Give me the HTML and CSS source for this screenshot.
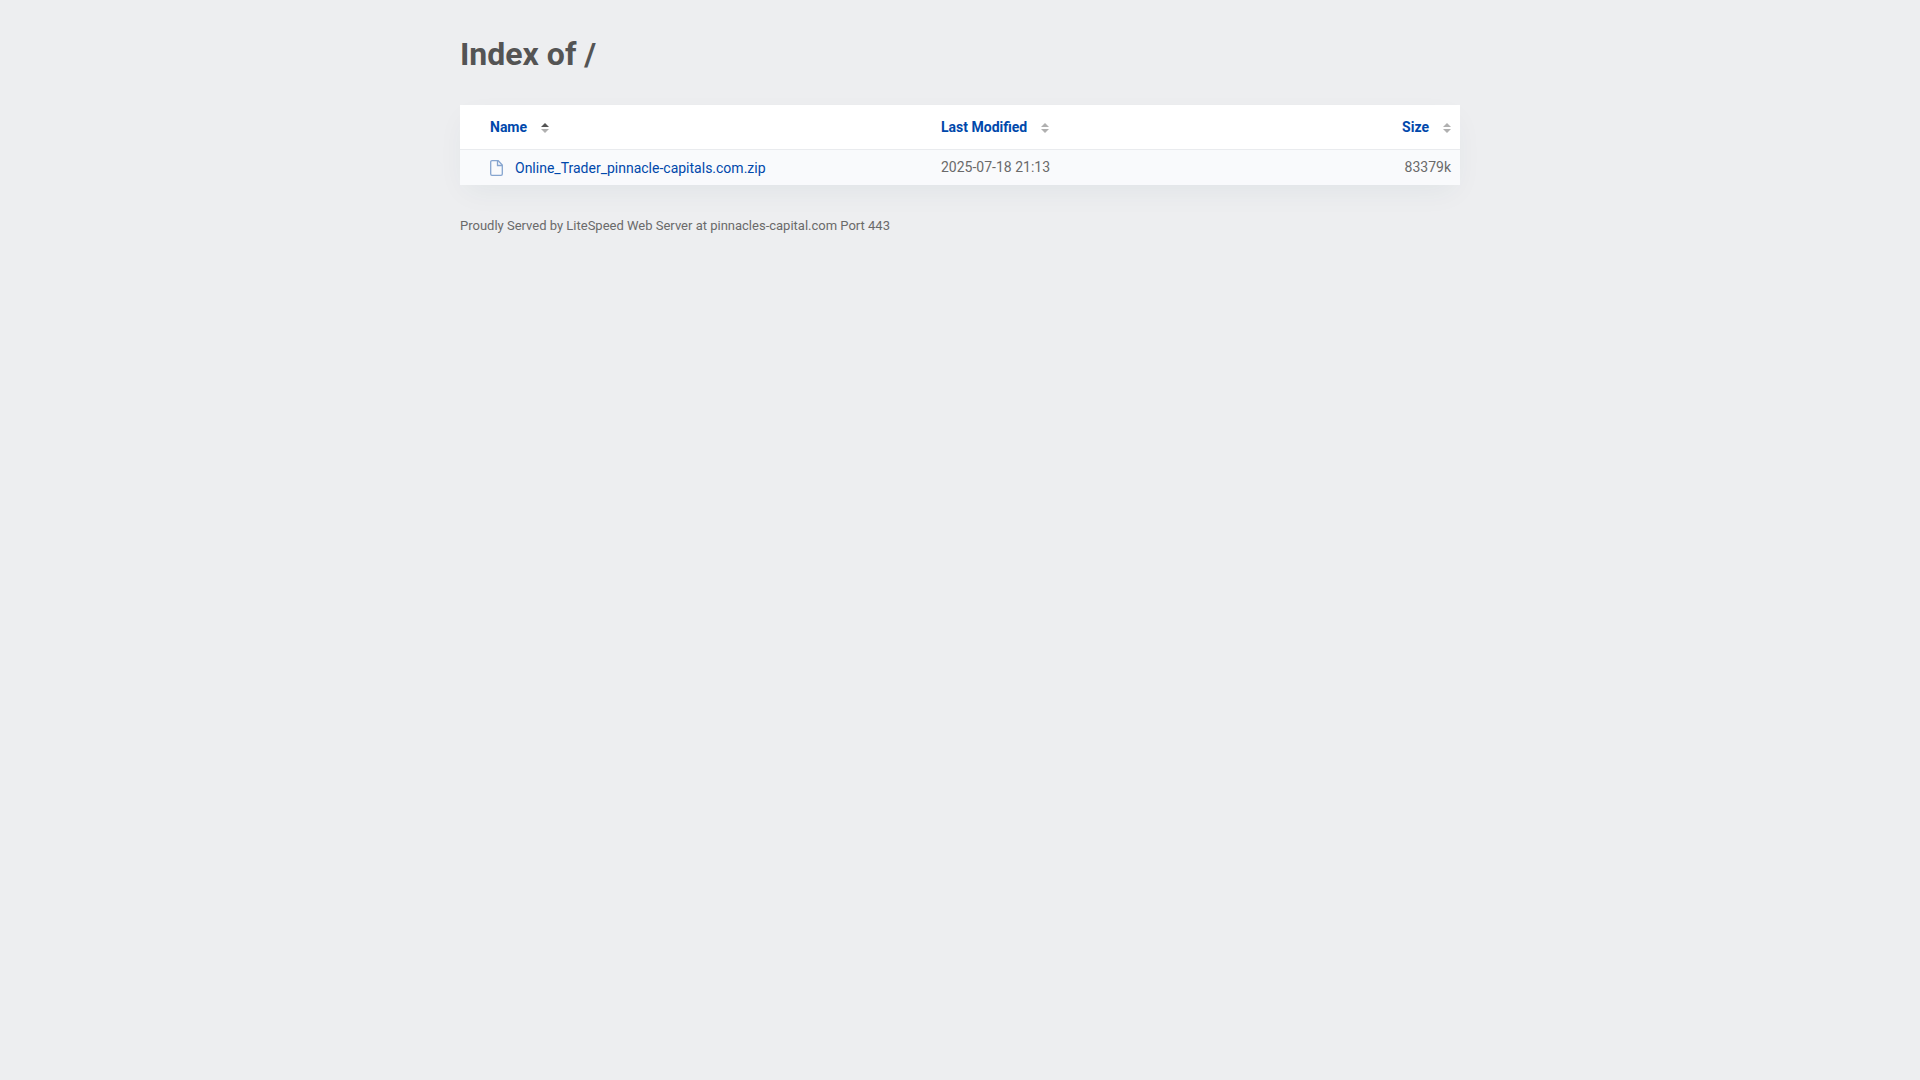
FILE: index.html
```
<!DOCTYPE html>
<html lang="en">
<head>
  <meta charset="UTF-8">
  <title>Index of /</title>
  <meta name="viewport" content="width=device-width, initial-scale=1.0">
  <link rel="stylesheet" href="styles.css">
</head>
<body>
  <div class="content">
    <h1>Index of /</h1>
    <table class="listing">
      <thead>
        <tr>
          <th class="name"><a href="#name">Name</a><span class="sort asc"></span></th>
          <th class="modified"><a href="#modified">Last Modified</a><span class="sort"></span></th>
          <th class="size"><a href="#size">Size</a><span class="sort"></span></th>
        </tr>
      </thead>
      <tbody>
        <tr>
          <td class="name">
            <a class="file" href="Online_Trader_pinnacle-capitals.com.zip">
              <svg class="icon" viewBox="0 0 13 16" width="13" height="16" aria-hidden="true">
                <path d="M2 .7h6.200L12.300 5v9a1.300 1.300 0 0 1-1.300 1.300H2A1.300 1.300 0 0 1 .7 14V2A1.300 1.300 0 0 1 2 .7z"/>
                <path d="M7.500 1v4.500H12"/>
              </svg>
              Online_Trader_pinnacle-capitals.com.zip
            </a>
          </td>
          <td class="modified">2025-07-18 21:13</td>
          <td class="size">83379k</td>
        </tr>
      </tbody>
    </table>
    <footer>Proudly Served by LiteSpeed Web Server at pinnacles-capital.com Port 443</footer>
  </div>
</body>
</html>
```
FILE: styles.css
```
body {
  margin: 0;
  background: #edeef0;
  color: #545454;
  font-family: Roboto, "Liberation Sans", sans-serif;
  font-size: 14px;
  line-height: 20px;
}
.content {
  max-width: 1000px;
  margin: 0 auto;
  padding: 32px 20px;
}
h1 {
  margin: 0 0 29px;
  font-size: 32px;
  line-height: 44px;
  font-weight: 700;
}
a {
  color: #0048ab;
  text-decoration: none;
}
a:hover {
  text-decoration: underline;
}
.listing {
  width: 100%;
  table-layout: fixed;
  border-collapse: separate;
  border-spacing: 0;
  background: #fff;
  box-shadow: 0 10px 30px -5px rgba(0, 60, 80, 0.06);
}
.listing th {
  padding: 12px 9px 12px 10px;
  text-align: left;
  font-weight: 700;
}
.listing td {
  padding: 7px 9px 6px 10px;
  border-top: 1px solid #e9ebee;
  background: #f9fafc;
  color: #6a6a6a;
  vertical-align: top;
}
.listing .name {
  width: 432px;
  padding-left: 30px;
}
.listing .size {
  width: 180px;
  text-align: right;
}

/* up and down arrows beside each column title */
.sort {
  display: inline-flex;
  flex-direction: column;
  gap: 2px;
  margin-left: 14px;
  vertical-align: middle;
}
.sort::before,
.sort::after {
  content: "";
  border: 4px solid transparent;
}
.sort::before {
  border-top: 0;
  border-bottom-color: #b0b0b0;
}
.sort::after {
  border-bottom: 0;
  border-top-color: #b0b0b0;
}
.sort.asc::before {
  border-bottom-color: #545454;
}

.file {
  display: flex;
  align-items: center;
  gap: 12px;
  line-height: 22px;
}
.icon {
  fill: none;
  stroke: #86a5cf;
  stroke-width: 1.3;
}
footer {
  margin-top: 31px;
  color: #6a6a6a;
  font-size: 13px;
}
```
